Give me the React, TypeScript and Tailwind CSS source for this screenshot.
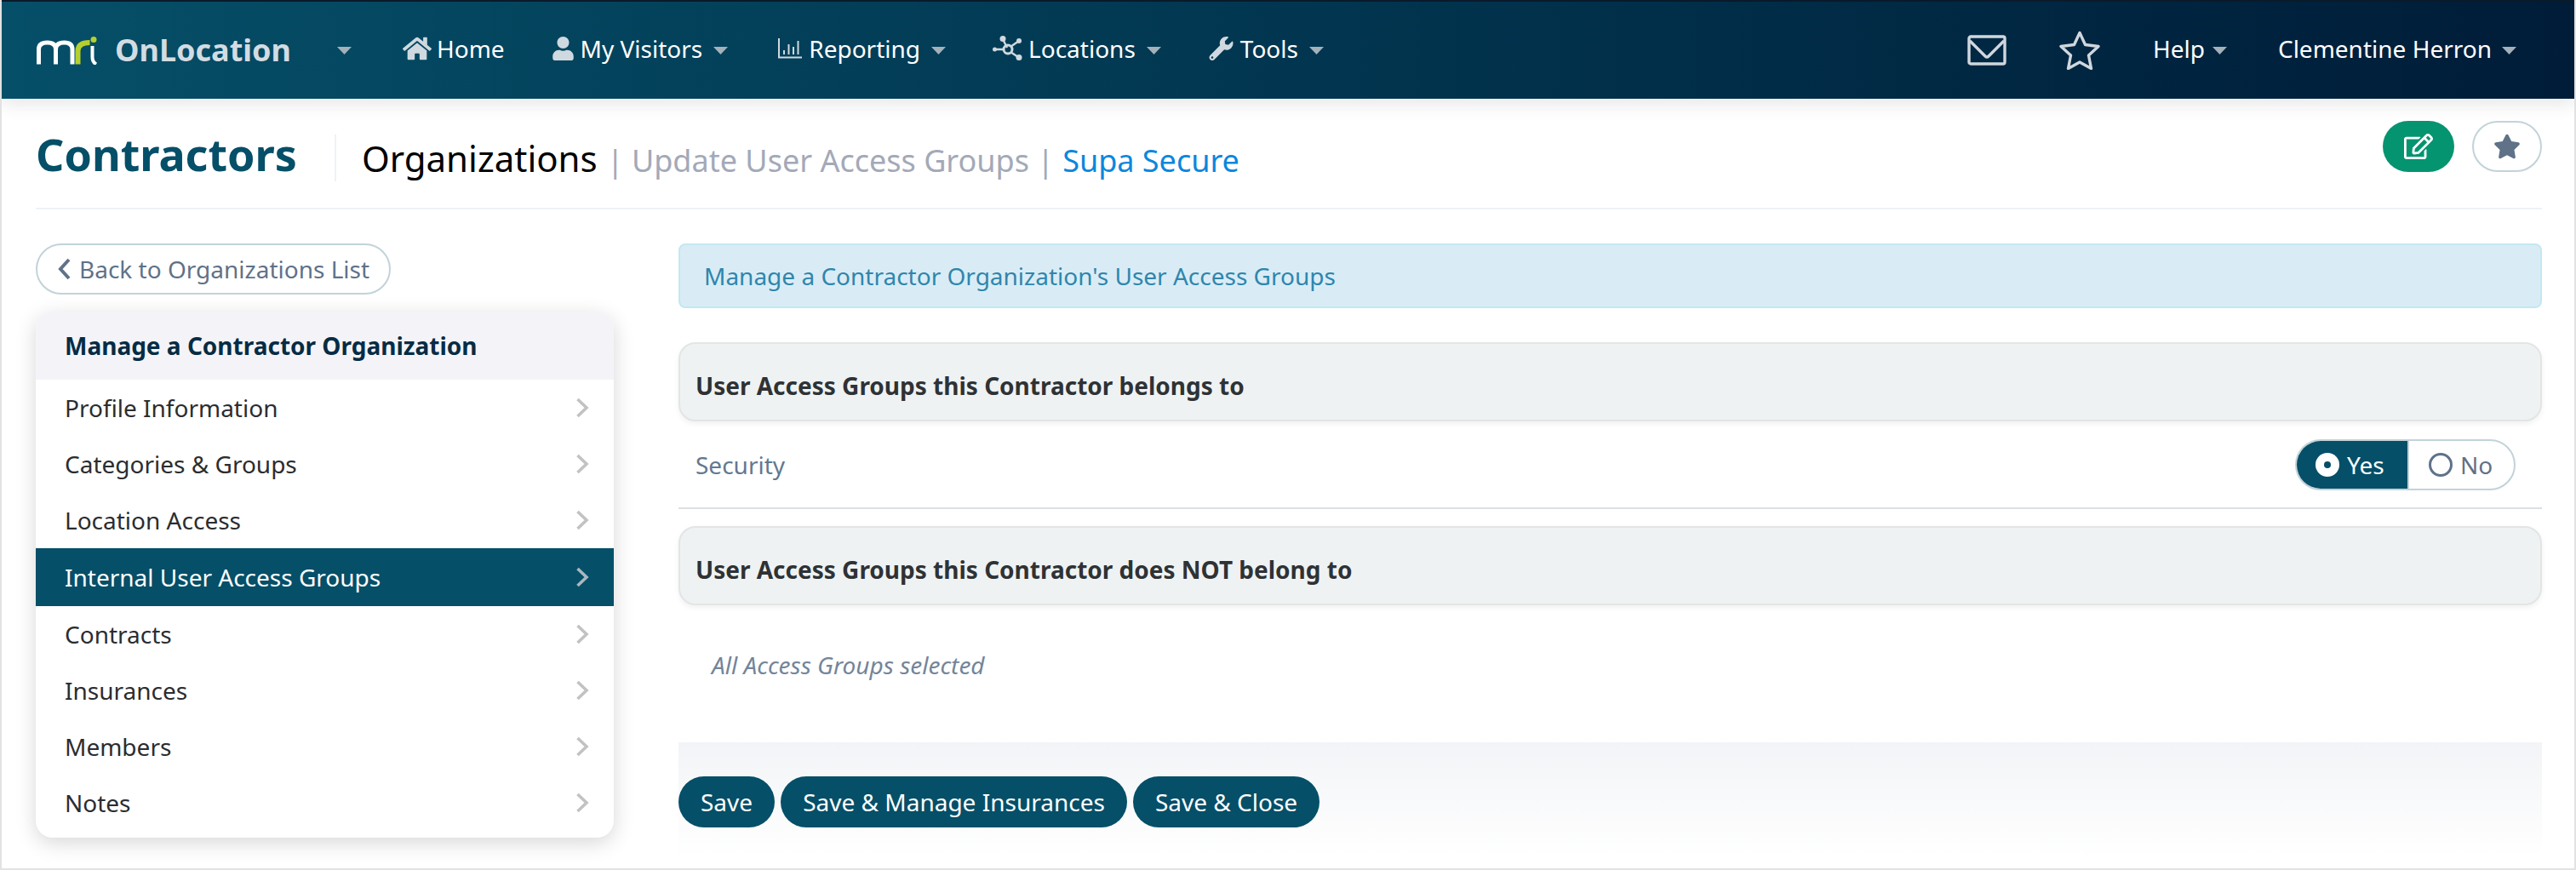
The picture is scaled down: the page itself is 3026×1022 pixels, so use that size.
import React from "react";
import { FaHome, FaUser, FaWrench, FaRegEdit, FaStar } from "react-icons/fa";

const sideItems = [
  "Profile Information",
  "Categories & Groups",
  "Location Access",
  "Internal User Access Groups",
  "Contracts",
  "Insurances",
  "Members",
  "Notes",
];

function Caret({ className = "" }: { className?: string }) {
  return (
    <svg width="17" height="9" viewBox="0 0 17 9" className={className}>
      <path d="M0 0h17L8.500 9z" fill="#a3b1ba" />
    </svg>
  );
}

function ChevronRight({ color = "#c2c2c2" }: { color?: string }) {
  return (
    <svg width="16" height="24" viewBox="0 0 16 24" fill="none">
      <path d="M2.500 2l10.500 10-10.500 10" stroke={color} strokeWidth="3.600" />
    </svg>
  );
}

function MriLogo() {
  return (
    <svg width="72" height="33" viewBox="0 0 72 33" fill="none">
      <path d="M3.500 32.500V15q0-8 10-8 10 0 10 8v17.500M23.500 15q0-8 10-8 9.500 0 9.500 8v17.500" stroke="#fff" strokeWidth="5" />
      <path d="M49.500 32.500V17q0-10 14-10" stroke="#b5cf2f" strokeWidth="6" />
      <path d="M66.500 11v13q0 6 4.500 8.500" stroke="#fff" strokeWidth="4" />
      <circle cx="68" cy="3.500" r="3.500" fill="#b5cf2f" />
    </svg>
  );
}

function ChartIcon() {
  return (
    <svg width="28" height="26" viewBox="0 0 28 26" fill="none" stroke="#cfd9df" strokeWidth="2">
      <path d="M1 1v22.500h27" />
      <path d="M7 20v-5M12.500 20V8M18 20v-9M23.500 20V4" />
    </svg>
  );
}

function NetworkIcon() {
  return (
    <svg width="36" height="30" viewBox="0 0 36 30" fill="#cfd9df">
      <circle cx="12" cy="3.500" r="3.500" />
      <circle cx="31" cy="6" r="3" />
      <circle cx="2.500" cy="16" r="2.500" />
      <circle cx="31" cy="25.500" r="3.500" />
      <circle cx="18" cy="16" r="5" fill="none" stroke="#cfd9df" strokeWidth="3" />
      <path d="M12 4l5 10M31 6l-10 7M3 16h10M21 19l9 6" stroke="#cfd9df" strokeWidth="2.400" />
    </svg>
  );
}

function MailIcon() {
  return (
    <svg width="46" height="36" viewBox="0 0 46 36" fill="none" stroke="#d0d7dd" strokeWidth="3.400" strokeLinejoin="round">
      <rect x="2" y="2" width="42" height="32" rx="2" />
      <path d="M3 7l18 18q2 2 4 0L43 7" />
    </svg>
  );
}

function StarOutline() {
  return (
    <svg width="48" height="46" viewBox="0 0 48 46" fill="none" stroke="#d0d7dd" strokeWidth="3.400" strokeLinejoin="round">
      <path d="M24 2.500l6.500 14 15.500 2-11.500 10.500 3 15.500-13.500-7.500-13.500 7.500 3-15.500L2 18.500l15.500-2z" />
    </svg>
  );
}

function NavItem({
  icon,
  label,
  caret = true,
  className = "",
}: {
  icon: React.ReactNode;
  label: string;
  caret?: boolean;
  className?: string;
}) {
  return (
    <div className={`flex items-center ${className}`}>
      {icon}
      <span className="text-[28px] leading-none text-white">{label}</span>
      {caret && <Caret className="ml-[13px] mt-[4px]" />}
    </div>
  );
}

function SectionHeader({ title }: { title: string }) {
  return (
    <div className="flex h-[93px] items-center rounded-[20px] border-2 border-[#e3e5e5] bg-[#eff2f3] pl-[18px] pt-[8px] shadow-[0_3px_6px_rgba(0,0,0,0.06)]">
      <span className="text-[28px] font-bold text-[#2e3235]">{title}</span>
    </div>
  );
}

export default function App() {
  return (
    <div className="flex h-[1022px] w-[3026px] flex-col overflow-hidden border-x-[2px] border-b-[2px] border-x-[#e2e2e2] border-b-[#e2e2e2] bg-white font-['Noto_Sans',sans-serif]">
      <header className="flex h-[116px] shrink-0 items-center border-t-[2px] border-t-[#0a1a2a] bg-gradient-to-r from-[#064f68] via-[#023650] to-[#001c38] pl-[40px] pr-[68px] shadow-[0_6px_20px_rgba(0,0,0,0.1)]">
        <div className="flex items-center">
          <MriLogo />
          <span className="ml-[21px] text-[36px] font-bold leading-none text-[#d3dce2]">OnLocation</span>
        </div>
        <Caret className="ml-[54px]" />
        <div className="mb-[4px] ml-[60px] flex items-center">
          <NavItem icon={<FaHome className="mr-[6px] h-[32px] w-[34px] text-[#cfd9df]" />} label="Home" caret={false} />
          <NavItem icon={<FaUser className="mr-[8px] h-[28px] w-[25px] text-[#cfd9df]" />} label="My Visitors" className="ml-[56px]" />
          <NavItem icon={<span className="mr-[8px]"><ChartIcon /></span>} label="Reporting" className="ml-[59px]" />
          <NavItem icon={<span className="mr-[6px]"><NetworkIcon /></span>} label="Locations" className="ml-[55px]" />
          <NavItem icon={<FaWrench className="mr-[8px] h-[28px] w-[29px] text-[#cfd9df]" />} label="Tools" className="ml-[56px]" />
        </div>
        <div className="ml-auto flex items-center">
          <MailIcon />
          <span className="ml-[62px]"><StarOutline /></span>
          <span className="mb-[4px] ml-[62px] text-[28px] leading-none text-white">Help</span>
          <Caret className="ml-[9px]" />
          <span className="mb-[4px] ml-[60px] text-[28px] leading-none text-white">Clementine Herron</span>
          <Caret className="ml-[12px]" />
        </div>
      </header>

      <div className="ml-[40px] mr-[38px] flex h-[130px] shrink-0 border-b-[2px] border-b-[#eff2f3]">
        <div className="flex h-[100px] flex-1 items-end">
          <h1 className="w-[351px] text-[52px] font-bold leading-[70px] text-[#054f68]">Contractors</h1>
          <div className="mb-[3px] flex h-[55px] items-center border-l-[2px] border-l-[#eff2f3] pl-[30px]">
            <div className="flex items-baseline text-[36px] leading-none">
              <span className="text-[42px] text-black">Organizations</span>
              <span className="ml-[11px] text-[#a3a9b8]">| Update User Access Groups |</span>
              <span className="ml-[10px] text-[#0b87dd]">Supa Secure</span>
            </div>
          </div>
        </div>
        <div className="mt-[26px] flex h-[60px] items-center gap-[21px]">
          <button className="flex h-[60px] w-[84px] items-center justify-center rounded-full bg-[#049470]">
            <FaRegEdit className="h-[32px] w-[34px] text-white" />
          </button>
          <button className="flex h-[60px] w-[82px] items-center justify-center rounded-full border-2 border-[#c2d3d8] bg-white">
            <FaStar className="h-[30px] w-[32px] text-[#5f7288]" />
          </button>
        </div>
      </div>

      <div className="ml-[40px] mr-[38px] flex flex-1 pt-[40px]">
        <aside className="w-[679px] shrink-0">
          <button className="flex h-[60px] w-[417px] items-center rounded-full border-2 border-[#c2d3d8] bg-white pl-[24px] text-[28px] leading-none text-[#5f7288]">
            <svg width="16" height="26" viewBox="0 0 16 26" fill="none" className="mr-[9px]">
              <path d="M13 2L3 13l10 11" stroke="#5f7288" strokeWidth="4" />
            </svg>
            Back to Organizations List
          </button>
          <div className="mt-[20px] h-[618px] overflow-hidden rounded-[20px] bg-white shadow-[0_6px_24px_rgba(0,0,0,0.16)]">
            <div className="flex h-[80px] items-center bg-[#f4f4f8] pl-[34px] text-[28px] font-bold text-[#062c45]">
              Manage a Contractor Organization
            </div>
            {sideItems.map((item) => {
              const active = item === "Internal User Access Groups";
              return (
                <div
                  key={item}
                  className={`flex items-center justify-between pl-[34px] pr-[29px] text-[28px] ${
                    active ? "h-[68px] bg-[#054f68] text-white" : "h-[66px] text-[#2b2d30]"
                  }`}
                >
                  <span>{item}</span>
                  <ChevronRight color={active ? "#a9b8c0" : "#c2c2c2"} />
                </div>
              );
            })}
          </div>
        </aside>

        <main className="ml-[76px] flex-1">
          <div className="flex h-[76px] items-center rounded-[8px] border-2 border-[#c2e8f2] bg-[#d9ecf6] pl-[28px] text-[28px] text-[#2f86ac]">
            Manage a Contractor Organization's User Access Groups
          </div>
          <div className="mt-[40px]">
            <SectionHeader title="User Access Groups this Contractor belongs to" />
          </div>
          <div className="flex h-[103px] items-center justify-between border-b-[2px] border-b-[#dde0e2] pl-[20px] pr-[31px]">
            <span className="text-[28px] text-[#62788f]">Security</span>
            <div className="flex h-[60px] w-[259px] overflow-hidden rounded-full border-2 border-[#c2d3d8] text-[28px]">
              <div className="flex w-[130px] items-center bg-[#054f68] pl-[22px] text-white">
                <svg width="28" height="28" viewBox="0 0 28 28" className="mr-[9px]">
                  <circle cx="14" cy="14" r="14" fill="#fff" />
                  <circle cx="14" cy="14" r="4" fill="#054f68" />
                </svg>
                Yes
              </div>
              <div className="flex flex-1 items-center border-l-2 border-l-[#c2d3d8] pl-[23px] text-[#5f7288]">
                <svg width="28" height="28" viewBox="0 0 28 28" fill="none" className="mr-[9px]">
                  <circle cx="14" cy="14" r="12.500" stroke="#5f7288" strokeWidth="3" />
                </svg>
                No
              </div>
            </div>
          </div>
          <div className="mt-[20px]">
            <SectionHeader title="User Access Groups this Contractor does NOT belong to" />
          </div>
          <div className="flex h-[161px] items-start pl-[39px] pt-[50px] text-[28px] italic leading-[40px] text-[#73859a]">
            All Access Groups selected
          </div>
          <div className="h-[134px] bg-gradient-to-b from-[#f2f4f7] to-white pt-[40px]">
            <div className="flex gap-[7px]">
              <button className="h-[60px] w-[113px] rounded-full bg-[#054f68] text-[28px] text-white">Save</button>
              <button className="h-[60px] w-[407px] rounded-full bg-[#054f68] text-[28px] text-white">Save &amp; Manage Insurances</button>
              <button className="h-[60px] w-[219px] rounded-full bg-[#054f68] text-[28px] text-white">Save &amp; Close</button>
            </div>
          </div>
        </main>
      </div>
    </div>
  );
}
